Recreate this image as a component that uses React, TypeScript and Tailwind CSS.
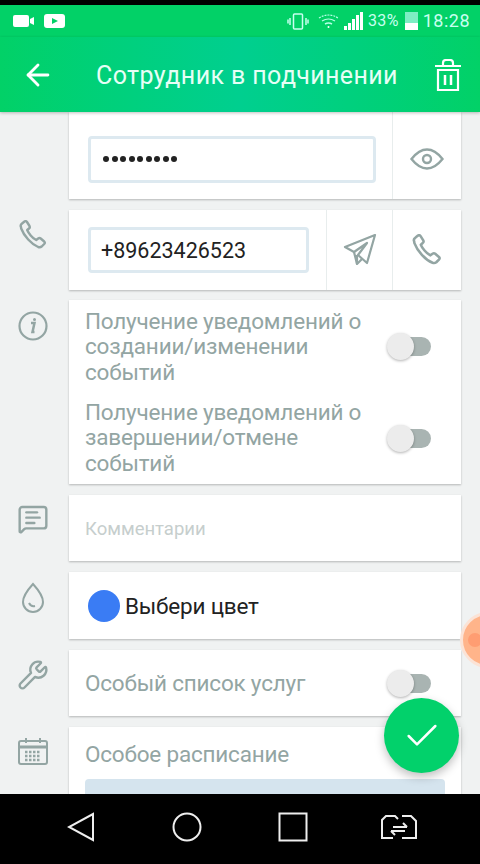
import { ArrowLeft, Check, MessageSquareText, Wrench } from 'lucide-react';

function Toggle() {
  return (
    <div className="relative w-[44px] h-[27px] shrink-0 flex items-center justify-end">
      <div className="w-[30px] h-[19px] rounded-full bg-[#a9b4b2]" />
      <div className="absolute left-0 top-0 w-[27px] h-[27px] rounded-full bg-[#ececec] shadow-[0_1px_3px_rgba(0,0,0,0.3)]" />
    </div>
  );
}

function PhoneIcon({ size, className }: { size: number; className?: string }) {
  return (
    <svg width={size} height={size} viewBox="0 0 30 30" fill="none" stroke="currentColor" strokeWidth="2.400" strokeLinejoin="round" className={className}>
      <path d="M3 7q-1-2 1-3.500l2.500-2q1.500-1 2.500.5l2.500 4q.8 1.500-.5 2.500l-1.800 1.500q1 2.500 3.500 5.500t5.500 4.500l2-1.500q1.300-1 2.500 0l3.500 3q1.200 1.200 0 2.500l-2.500 2.500q-1.500 1.200-3.500.5-5-2-10-7.500t-7-11z" />
    </svg>
  );
}

function Row({ icon, children, cardClass }: { icon?: React.ReactNode; children: React.ReactNode; cardClass: string }) {
  return (
    <div className="flex">
      <div className="w-[66px] mr-[3px] shrink-0 flex justify-center">{icon}</div>
      <div className={`w-[392px] bg-white shadow-[0_1px_2px_rgba(0,0,0,0.25)] ${cardClass}`}>{children}</div>
    </div>
  );
}

export default function App() {
  return (
    <div className="w-[480px] h-[864px] flex flex-col overflow-hidden relative bg-[#f0f2f2] font-['Roboto',sans-serif]">
      <div className="h-[5px] bg-black shrink-0" />

      {/* status bar */}
      <div className="h-[32px] shrink-0 bg-[#02d167] flex items-center justify-between pl-[13px] pr-[10px] text-[#c8fff0]">
        <div className="flex items-center gap-[9px]">
          <svg width="22" height="14" viewBox="0 0 22 14" fill="white">
            <rect x="0" y="1" width="16" height="12" rx="2" />
            <path d="M17 5l4-2v8l-4-2z" />
          </svg>
          <svg width="21" height="14" viewBox="0 0 21 14">
            <rect x="0" y="0" width="21" height="14" rx="3" fill="white" />
            <path d="M8 4l6 3-6 3z" fill="#02d167" />
          </svg>
        </div>
        <div className="flex items-center">
          <svg width="22" height="17" viewBox="0 0 22 17" fill="none" stroke="#c8fff0" strokeWidth="1.500" className="mr-[9px]">
            <rect x="6.500" y="1" width="9" height="15" rx="1" />
            <path d="M3 5v7M1 6.500v4M19 5v7M21 6.500v4" />
          </svg>
          <svg width="21" height="16" viewBox="0 0 21 16" fill="none" stroke="#b6ffe6" strokeWidth="1.200" className="mr-[5px]">
            <path d="M1 5q9.500-6 19 0" strokeDasharray="2 1" />
            <path d="M4 8q6.500-4 13 0" />
            <path d="M7 11q3.500-2 7 0" strokeWidth="1.500" />
            <circle cx="10.500" cy="14" r="1" fill="white" stroke="none" />
          </svg>
          <svg width="19" height="18" viewBox="0 0 19 18" fill="white" className="mr-[5px]">
            <rect x="0" y="14" width="3" height="4" />
            <rect x="4" y="11" width="3" height="7" />
            <rect x="8" y="7" width="3" height="11" />
            <rect x="12" y="3" width="3" height="15" />
            <rect x="16" y="0" width="3" height="18" />
          </svg>
          <span className="text-[16px] leading-none tracking-[0.3px] mr-[6px]">33%</span>
          <div className="w-[13px] h-[18px] mr-[5px] flex flex-col">
            <div className="flex-1 bg-[#7eeec4]" />
            <div className="h-[7px] bg-white" />
          </div>
          <span className="text-[18px] leading-none tracking-[0.5px]">18:28</span>
        </div>
      </div>

      {/* header */}
      <div className="h-[75px] shrink-0 relative z-10 flex items-center bg-gradient-to-r from-[#02d167] via-[#00cf8f] to-[#02d167] shadow-[0_1px_3px_rgba(0,0,0,0.25)] text-[#e6fff6]">
        <ArrowLeft size={34} strokeWidth={2} className="ml-[21px] text-white" />
        <span className="ml-[41px] pt-[2px] text-[25px] leading-none tracking-[0.4px] whitespace-nowrap">Сотрудник в подчинении</span>
        <svg width="28" height="32" viewBox="0 0 28 32" fill="none" stroke="white" strokeWidth="2.200" className="absolute left-[434px] top-[22px]">
          <path d="M1 7h26M9 7V4q0-3 3-3h4q3 0 3 3v3M4 11h20v20H4z" />
          <path d="M11 16v10M17 16v10" strokeWidth="2.500" />
        </svg>
      </div>

      {/* form */}
      <div className="flex-1 min-h-0 overflow-hidden flex flex-col gap-[11px] text-[#93a5a3]">
        <Row cardClass="h-[87px] flex shrink-0">
          <div className="w-[323px] pl-[19px] pt-[24px]">
            <div className="w-[288px] h-[47px] rounded-[4px] border-[3px] border-[#dde9f0] flex items-center pl-[12px] pb-[2px] gap-[2.500px]">
              {[0, 1, 2, 3, 4, 5, 6, 7, 8].map((i) => (
                <span key={i} className="w-[6px] h-[6px] rounded-full bg-[#222]" />
              ))}
            </div>
          </div>
          <div className="flex-1 border-l border-[#e8eded] flex items-center justify-center pt-[7px]">
            <svg width="34" height="22" viewBox="0 0 34 22" fill="none" stroke="currentColor" strokeWidth="2.400">
              <path d="M1.500 11Q9 1.500 17 1.500T32.500 11Q25 20.500 17 20.500T1.500 11z" />
              <circle cx="17" cy="11" r="4" />
            </svg>
          </div>
        </Row>

        <Row
          cardClass="h-[80px] flex"
          icon={<PhoneIcon size={30} className="mt-[10px]" />}
        >
          <div className="w-[257px] pl-[19px] pt-[17px]">
            <div className="w-[221px] h-[46px] rounded-[4px] border-[3px] border-[#dde9f0] flex items-center pl-[10px] pt-[2px] text-[#222] text-[21.500px]">
              +89623426523
            </div>
          </div>
          <div className="w-[66px] border-l border-[#e8eded] flex items-center justify-center">
            <svg width="34" height="34" viewBox="0 0 34 34" fill="none" stroke="currentColor" strokeWidth="2.200" strokeLinejoin="round">
              <path d="M32 2L2 14l9 5 13 -9-9 12 9 8z" />
              <path d="M11 19l3 12 5-5" />
              <path d="M14 31v-9" />
            </svg>
          </div>
          <div className="flex-1 border-l border-[#e8eded] flex items-center justify-center">
            <PhoneIcon size={32} />
          </div>
        </Row>

        <div className="-mt-px">
          <Row
            cardClass="h-[184px] pl-[16px] pr-[30px] text-[22.500px] leading-[25.500px] tracking-[-0.2px]"
            icon={
              <svg width="30" height="30" viewBox="0 0 30 30" fill="none" stroke="currentColor" className="mt-[11px]">
                <circle cx="15" cy="15" r="13.500" strokeWidth="2.200" />
                <path d="M13 12h3.500l-2 9h2" strokeWidth="2.500" />
                <circle cx="16.500" cy="8.500" r="1.500" fill="currentColor" stroke="none" />
              </svg>
            }
          >
            <div className="flex items-center justify-between h-[92px]">
              <div className="whitespace-nowrap pt-[2px]">
                Получение уведомлений о<br />создании/изменении<br />событий
              </div>
              <Toggle />
            </div>
            <div className="flex items-center justify-between h-[92px]">
              <div className="whitespace-nowrap">
                Получение уведомлений о<br />завершении/отмене<br />событий
              </div>
              <Toggle />
            </div>
          </Row>
        </div>

        <Row
          cardClass="h-[66px] flex items-center pl-[16px] pt-[4px]"
          icon={<MessageSquareText size={32} strokeWidth={1.800} className="mt-[8px]" />}
        >
          <span className="text-[#c6cecd] text-[18.500px]">Комментарии</span>
        </Row>

        <Row
          cardClass="h-[67px] flex items-center pl-[19px]"
          icon={
            <svg width="24" height="32" viewBox="0 0 24 32" fill="none" stroke="currentColor" strokeWidth="2" className="mt-[10px]">
              <path d="M12 2q10 11 10 18a10 10 0 0 1-20 0q0-7 10-18z" />
              <path d="M8 21q2 4 6 3" />
            </svg>
          }
        >
          <span className="w-[32px] h-[32px] rounded-full bg-[#3a7cf4] shrink-0" />
          <span className="ml-[5px] pt-[2px] text-[#222] text-[22.500px] tracking-[-0.2px] whitespace-nowrap">Выбери цвет</span>
        </Row>

        <Row
          cardClass="h-[66px] flex items-center justify-between pl-[16px] pr-[30px]"
          icon={<Wrench size={32} strokeWidth={1.800} className="mt-[9px]" />}
        >
          <span className="pt-[2px] text-[22.500px] tracking-[-0.2px] whitespace-nowrap">Особый список услуг</span>
          <Toggle />
        </Row>

        <Row
          cardClass="h-[120px] pl-[16px] pt-[9px]"
          icon={
            <svg width="30" height="28" viewBox="0 0 30 28" className="mt-[10px]" fill="none" stroke="currentColor" strokeWidth="2">
              <rect x="1" y="4" width="28" height="23" rx="2" />
              <path d="M1 10h28" strokeWidth="3" />
              <path d="M8 1v5M22 1v5" />
              <path d="M7 15h16M7 19h16M7 23h16" strokeWidth="2.500" strokeDasharray="2.500 1.500" />
            </svg>
          }
        >
          <span className="block text-[22.500px] leading-[36px] tracking-[-0.2px] whitespace-nowrap">Особое расписание</span>
          <div className="mt-[7px] w-[360px] h-[60px] rounded-[4px] bg-[#d5e4ee]" />
        </Row>
      </div>

      {/* android nav */}
      <div className="h-[70px] shrink-0 bg-black relative z-10 flex items-center text-[#eee] pb-[4px]">
        <svg width="28" height="30" viewBox="0 0 28 30" fill="none" stroke="currentColor" strokeWidth="2" className="ml-[67px]">
          <path d="M26 2v26L2 15z" />
        </svg>
        <svg width="30" height="30" viewBox="0 0 30 30" fill="none" stroke="currentColor" strokeWidth="2" className="ml-[77px]">
          <circle cx="15" cy="15" r="13.500" />
        </svg>
        <svg width="30" height="30" viewBox="0 0 30 30" fill="none" stroke="currentColor" strokeWidth="2" className="ml-[76px]">
          <rect x="1.500" y="1.500" width="27" height="27" />
        </svg>
        <svg width="36" height="26" viewBox="0 0 36 26" fill="none" stroke="currentColor" strokeWidth="2" className="ml-[73px]">
          <path d="M12 24H1V6l4-4h9l3 3M21 2h9l5 5v17H21" />
          <path d="M12 13h14M22 9l4 4M24 17H10M14 21l-4-4" />
        </svg>
      </div>

      {/* overlays */}
      <div className="absolute left-[460px] top-[612px] w-[56px] h-[56px] rounded-full bg-[#ffb48a] border-[3px] border-[#fbe3d6] flex items-center justify-center">
        <span className="w-[14px] h-[14px] rounded-full bg-[#ff9d72] -ml-[26px]" />
      </div>
      <div className="absolute left-[384px] top-[698px] w-[75px] h-[75px] rounded-full bg-[#02d16b] flex items-center justify-center shadow-[0_4px_10px_rgba(0,0,0,0.25)] z-20">
        <Check size={40} strokeWidth={1.500} className="text-white" />
      </div>
    </div>
  );
}
